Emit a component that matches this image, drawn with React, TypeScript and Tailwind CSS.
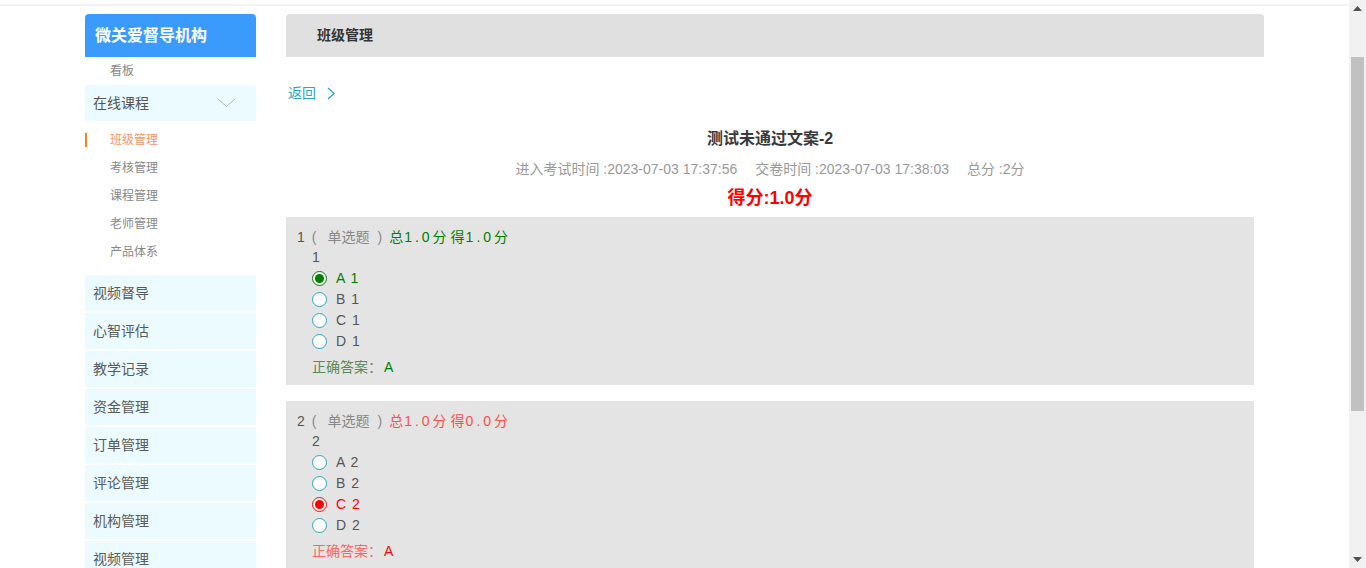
import React from 'react';

const font = { fontFamily: '"Liberation Sans", "Noto Sans CJK SC", sans-serif' };

const subItems = ['班级管理', '考核管理', '课程管理', '老师管理', '产品体系'];
const menuItems = ['视频督导', '心智评估', '教学记录', '资金管理', '订单管理', '评论管理', '机构管理', '视频管理', '系统设置'];

type Option = { label: string; state: 'none' | 'right' | 'wrong' };

const questions: { no: number; stem: string; got: string; ok: boolean; options: Option[] }[] = [
    {
        no: 1, stem: '1', got: '1.0', ok: true,
        options: [
            { label: 'A 1', state: 'right' },
            { label: 'B 1', state: 'none' },
            { label: 'C 1', state: 'none' },
            { label: 'D 1', state: 'none' },
        ],
    },
    {
        no: 2, stem: '2', got: '0.0', ok: false,
        options: [
            { label: 'A 2', state: 'none' },
            { label: 'B 2', state: 'none' },
            { label: 'C 2', state: 'wrong' },
            { label: 'D 2', state: 'none' },
        ],
    },
];

const Radio: React.FC<{ state: Option['state'] }> = ({ state }) => {
    if (state === 'none') {
        return <span className="w-[15px] h-[15px] rounded-full border border-[#2ba5c6] bg-white box-border" />;
    }
    const ring = state === 'right' ? 'border-[#008000]' : 'border-[#ff0000]';
    const dot = state === 'right' ? 'bg-[#008000]' : 'bg-[#ff0000]';
    return (
        <span className={`w-[15px] h-[15px] rounded-full border ${ring} bg-white box-border flex items-center justify-center`}>
            <span className={`w-[9px] h-[9px] rounded-full ${dot}`} />
        </span>
    );
};

// window scrollbar as it appears in the screenshot
const ScrollBar: React.FC = () => (
    <div className="fixed right-0 top-0 w-[17px] h-screen bg-[#f1f1f1] flex flex-col items-center">
        <div className="h-[17px] flex items-center justify-center">
            <svg width="9" height="5" viewBox="0 0 9 5"><path d="M0 5 L4.5 0 L9 5 Z" fill="#505050" /></svg>
        </div>
        <div className="mt-[40px] w-[13px] h-[354px] bg-[#c1c1c1]" />
        <div className="mt-auto h-[17px] flex items-center justify-center">
            <svg width="9" height="5" viewBox="0 0 9 5"><path d="M0 0 L9 0 L4.5 5 Z" fill="#505050" /></svg>
        </div>
    </div>
);

const App: React.FC = () => {
    return (
        <div className="bg-white min-h-[860px] text-[#555] pr-[17px]" style={font}>
            {/* top strip */}
            <div className="h-[4px]" />
            <div className="h-[2px] bg-[#f3f3f3]" />

            <div className="w-[1179px] mx-auto flex items-start gap-[30px] pt-[8px]">
                {/* Sidebar */}
                <div className="w-[171px] shrink-0">
                    <div className="h-[43px] bg-[#3a9bfc] rounded-t-[4px] flex items-center pl-[10px] text-white text-[16px] font-bold">
                        微关爱督导机构
                    </div>
                    <div className="h-[28px] flex items-center pl-[25px] text-[12px] text-[#888]">看板</div>
                    <div className="h-[36px] bg-[#ecfbff] flex items-center justify-between pl-[8px] pr-[20px] text-[14px] text-[#555]">
                        <span>在线课程</span>
                        <svg width="19" height="10" viewBox="0 0 19 10" fill="none">
                            <path d="M1 1 L9.5 8.5 L18 1" stroke="#b5b5b5" strokeWidth="1" />
                        </svg>
                    </div>
                    <div className="pt-[5px] pb-[9px]">
                        {subItems.map((s, i) => (
                            <div key={s} className="h-[28px] flex items-center relative text-[12px]">
                                {i === 0 && <span className="absolute left-0 top-[7px] w-[2px] h-[14px] bg-[#f08519]" />}
                                <span className={`pl-[25px] ${i === 0 ? 'text-[#f0956a]' : 'text-[#888]'}`}>{s}</span>
                            </div>
                        ))}
                    </div>
                    <div className="flex flex-col gap-[2px]">
                        {menuItems.map(m => (
                            <div key={m} className="h-[36px] bg-[#ecfbff] flex items-center pl-[8px] text-[14px] text-[#5a5a5a]">{m}</div>
                        ))}
                    </div>
                </div>

                {/* Main */}
                <div className="w-[978px] shrink-0">
                    <div className="h-[43px] bg-[#e0e0e0] rounded-t-[4px] flex items-center pl-[31px] text-[14px] font-bold text-[#333]">
                        班级管理
                    </div>

                    <div className="w-[968px]">
                        <div className="h-[30px] mt-[21px] flex items-center pl-[2px] text-[14px] text-[#2ba5c6]">
                            <span>返回</span>
                            <svg className="ml-[11px]" width="8" height="13" viewBox="0 0 8 13" fill="none">
                                <path d="M1 1 L7 6.5 L1 12" stroke="#2ba5c6" strokeWidth="1.3" />
                            </svg>
                        </div>

                        <div className="mt-[19px] h-[24px] flex items-center justify-center text-[16px] font-bold text-[#3a3a3a]">
                            测试未通过文案-2
                        </div>
                        <div className="mt-[8px] h-[20px] flex items-center justify-center gap-[18px] text-[14px] text-[#999]">
                            <span>进入考试时间 :2023-07-03 17:37:56</span>
                            <span>交卷时间 :2023-07-03 17:38:03</span>
                            <span>总分 :2分</span>
                        </div>
                        <div className="mt-[7px] h-[24px] flex items-center justify-center text-[18px] font-bold text-[#ff0000]">
                            得分:1.0分
                        </div>

                        <div className="mt-[7px] flex flex-col gap-[16px]">
                            {questions.map(q => {
                                const score = q.ok ? 'text-[#008000]' : 'text-[#ff4d4d]';
                                return (
                                    <div key={q.no} className="bg-[#e4e4e4] pt-[10px] pb-[8px] pl-[11px] text-[14px]">
                                        <div className="h-[20px] flex items-center">
                                            <span className="text-[#555]">{q.no}</span>
                                            <span className="text-[#888] ml-[7px]">(</span>
                                            <span className="text-[#888] ml-[11px]">单选题</span>
                                            <span className="text-[#888] ml-[8px]">)</span>
                                            <span className={`${score} ml-[7px]`}>总<span className="tracking-[3px] ml-[1px]">1.0</span>分</span>
                                            <span className={`${score} ml-[4px]`}>得<span className="tracking-[3px] ml-[1px]">{q.got}</span>分</span>
                                        </div>
                                        <div className="h-[21px] flex items-center pl-[15px] text-[#555]">{q.stem}</div>
                                        {q.options.map(o => (
                                            <div key={o.label} className="h-[21px] flex items-center pl-[15px]">
                                                <Radio state={o.state} />
                                                <span className={`ml-[9px] tracking-[1px] ${o.state === 'right' ? 'text-[#008000]' : o.state === 'wrong' ? 'text-[#ff0000]' : 'text-[#555]'}`}>
                                                    {o.label}
                                                </span>
                                            </div>
                                        ))}
                                        <div className="h-[20px] mt-[5px] flex items-center pl-[15px]">
                                            <span className={q.ok ? 'text-[#5a8a5a]' : 'text-[#ff6666]'}>正确答案：</span>
                                            <span className={`ml-[2px] ${q.ok ? 'text-[#008000]' : 'text-[#ff0000]'}`}>A</span>
                                        </div>
                                    </div>
                                );
                            })}
                        </div>
                        <div className="h-[120px]" />
                    </div>
                </div>
            </div>
            <ScrollBar />
        </div>
    );
};

export default App;
